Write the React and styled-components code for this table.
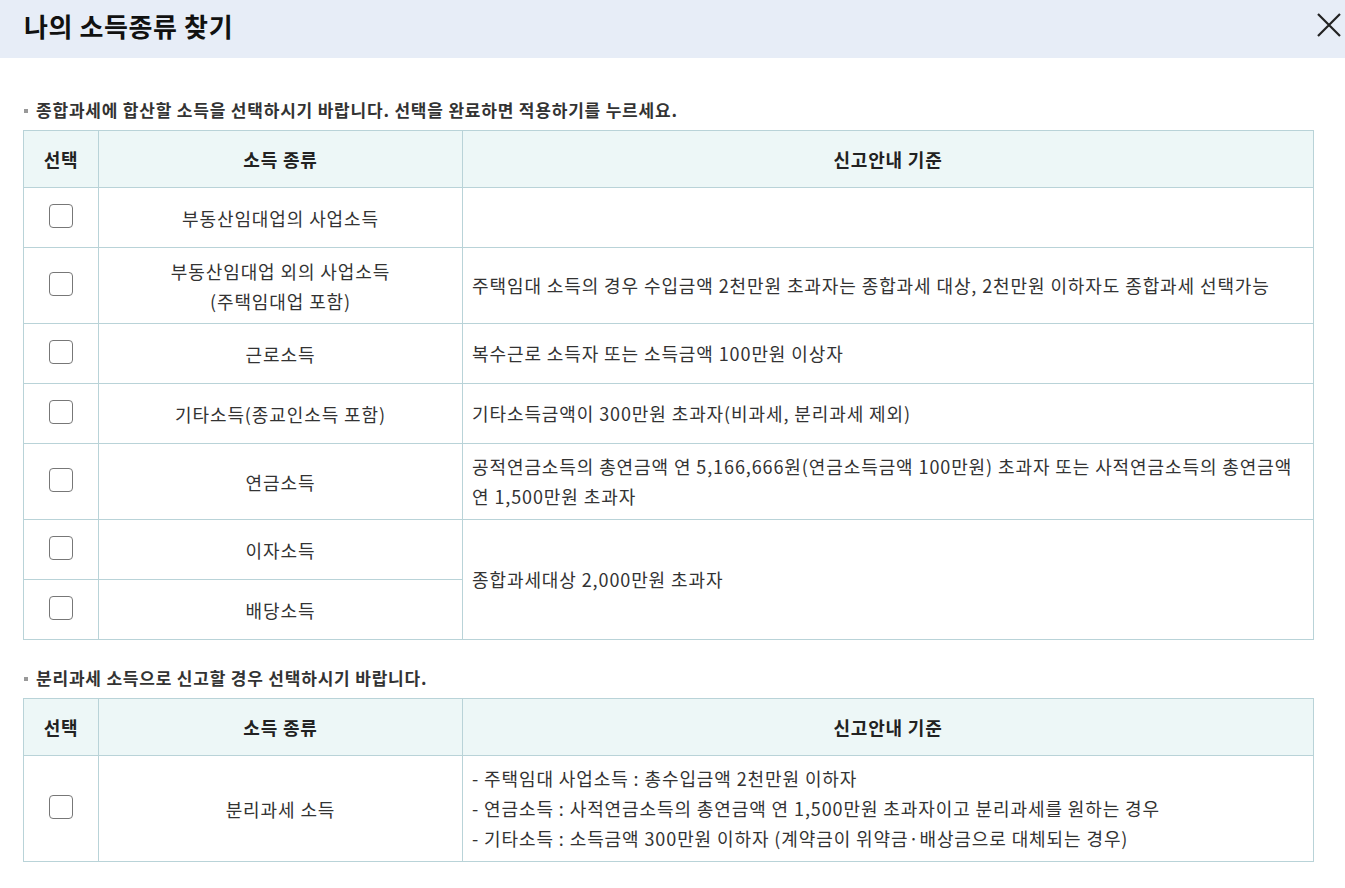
import styled, { createGlobalStyle } from 'styled-components'

const GlobalStyle = createGlobalStyle`
  body {
    margin: 0;
    background: #fff;
    font-family: "Noto Sans CJK KR", "Noto Sans", sans-serif;
    color: #222;
  }
`

const combined = [
  { name: '부동산임대업의 사업소득', basis: '' },
  {
    name: ['부동산임대업 외의 사업소득', '(주택임대업 포함)'],
    basis: '주택임대 소득의 경우 수입금액 2천만원 초과자는 종합과세 대상, 2천만원 이하자도 종합과세 선택가능',
    tall: true,
  },
  { name: '근로소득', basis: '복수근로 소득자 또는 소득금액 100만원 이상자' },
  { name: '기타소득(종교인소득 포함)', basis: '기타소득금액이 300만원 초과자(비과세, 분리과세 제외)' },
  {
    name: '연금소득',
    basis: [
      '공적연금소득의 총연금액 연 5,166,666원(연금소득금액 100만원) 초과자 또는 사적연금소득의 총연금액',
      '연 1,500만원 초과자',
    ],
    tall: true,
  },
  { name: '이자소득', basis: '종합과세대상 2,000만원 초과자', span: 2 },
  { name: '배당소득', skip: true },
]

const lines = (v) => (Array.isArray(v) ? v.map((l, i) => <div key={i}>{l}</div>) : v)

const Check = () => <Box type='checkbox' />

const Header = () => (
  <thead>
    <tr>
      <Th $w={75}>선택</Th>
      <Th $w={364}>소득 종류</Th>
      <Th>신고안내 기준</Th>
    </tr>
  </thead>
)

const App = () => {
  return (
    <>
      <GlobalStyle />
      <TopBar>
        <Title>나의 소득종류 찾기</Title>
        <Close aria-label='닫기'>
          <svg width='26' height='26' viewBox='0 0 26 26'>
            <path d='M2 2 L24 24 M24 2 L2 24' stroke='#222' strokeWidth='2.2' />
          </svg>
        </Close>
      </TopBar>
      <Body>
        <Label $top={40}>종합과세에 합산할 소득을 선택하시기 바랍니다. 선택을 완료하면 적용하기를 누르세요.</Label>
        <Table>
          <Header />
          <tbody>
            {combined.map((row, i) => (
              <Row key={i} $tall={row.tall}>
                <CheckCell>
                  <Check />
                </CheckCell>
                <NameCell>{lines(row.name)}</NameCell>
                {!row.skip && <BasisCell rowSpan={row.span || 1}>{lines(row.basis)}</BasisCell>}
              </Row>
            ))}
          </tbody>
        </Table>
        <Label $top={26}>분리과세 소득으로 신고할 경우 선택하시기 바랍니다.</Label>
        <Table>
          <Header />
          <tbody>
            <Row $tall>
              <CheckCell>
                <Check />
              </CheckCell>
              <NameCell>분리과세 소득</NameCell>
              <BasisCell>
                <div>- 주택임대 사업소득 : 총수입금액 2천만원 이하자</div>
                <div>- 연금소득 : 사적연금소득의 총연금액 연 1,500만원 초과자이고 분리과세를 원하는 경우</div>
                <div>- 기타소득 : 소득금액 300만원 이하자 (계약금이 위약금·배상금으로 대체되는 경우)</div>
              </BasisCell>
            </Row>
          </tbody>
        </Table>
      </Body>
    </>
  )
}
export default App

const TopBar = styled.header`
  height: 58px;
  background: #e7edf7;
  display: flex;
  align-items: center;
  justify-content: space-between;
  padding: 0 3px 8px 24px;
  box-sizing: border-box;
`
const Title = styled.h1`
  margin: 0;
  font-size: 26px;
  font-weight: 700;
  color: #111;
  letter-spacing: 0.6px;
`
const Close = styled.button`
  border: 0;
  background: none;
  padding: 0;
  width: 26px;
  height: 26px;
  display: flex;
  cursor: pointer;
`
const Body = styled.main`
  padding: 0 32px 0 23px;
`
const Label = styled.p`
  margin: ${(p) => p.$top}px 0 8px;
  padding-left: 13px;
  position: relative;
  font-size: 17px;
  font-weight: 700;
  color: #333;
  line-height: 24px;
  letter-spacing: 0.8px;
  &::before {
    content: '';
    position: absolute;
    left: 1px;
    top: 11px;
    width: 4px;
    height: 4px;
    background: #999;
  }
`
const Table = styled.table`
  width: 1291px;
  border-collapse: collapse;
  table-layout: fixed;
  font-size: 18px;
  color: #333;
`
const Th = styled.th`
  width: ${(p) => (p.$w ? `${p.$w - 1}px` : 'auto')};
  height: 56px;
  background: #edf7f7;
  border: 1px solid #b9d3d8;
  font-weight: 700;
  color: #222;
  padding: 0;
  letter-spacing: 0.8px;
`
const Row = styled.tr`
  height: ${(p) => (p.$tall ? 76 : 60)}px;
`
const Td = styled.td`
  border: 1px solid #b9d3d8;
  line-height: 30px;
  padding: 0;
  letter-spacing: 0.9px;
`
const CheckCell = styled(Td)`
  text-align: center;
  vertical-align: middle;
`
const NameCell = styled(Td)`
  text-align: center;
`
const BasisCell = styled(Td)`
  padding: 7px 10px 8px 9px;
`
const Box = styled.input`
  appearance: none;
  width: 24px;
  height: 24px;
  margin: 4px 1px 0 0;
  border: 1.5px solid #777;
  border-radius: 4px;
  background: #fff;
  box-sizing: border-box;
`
